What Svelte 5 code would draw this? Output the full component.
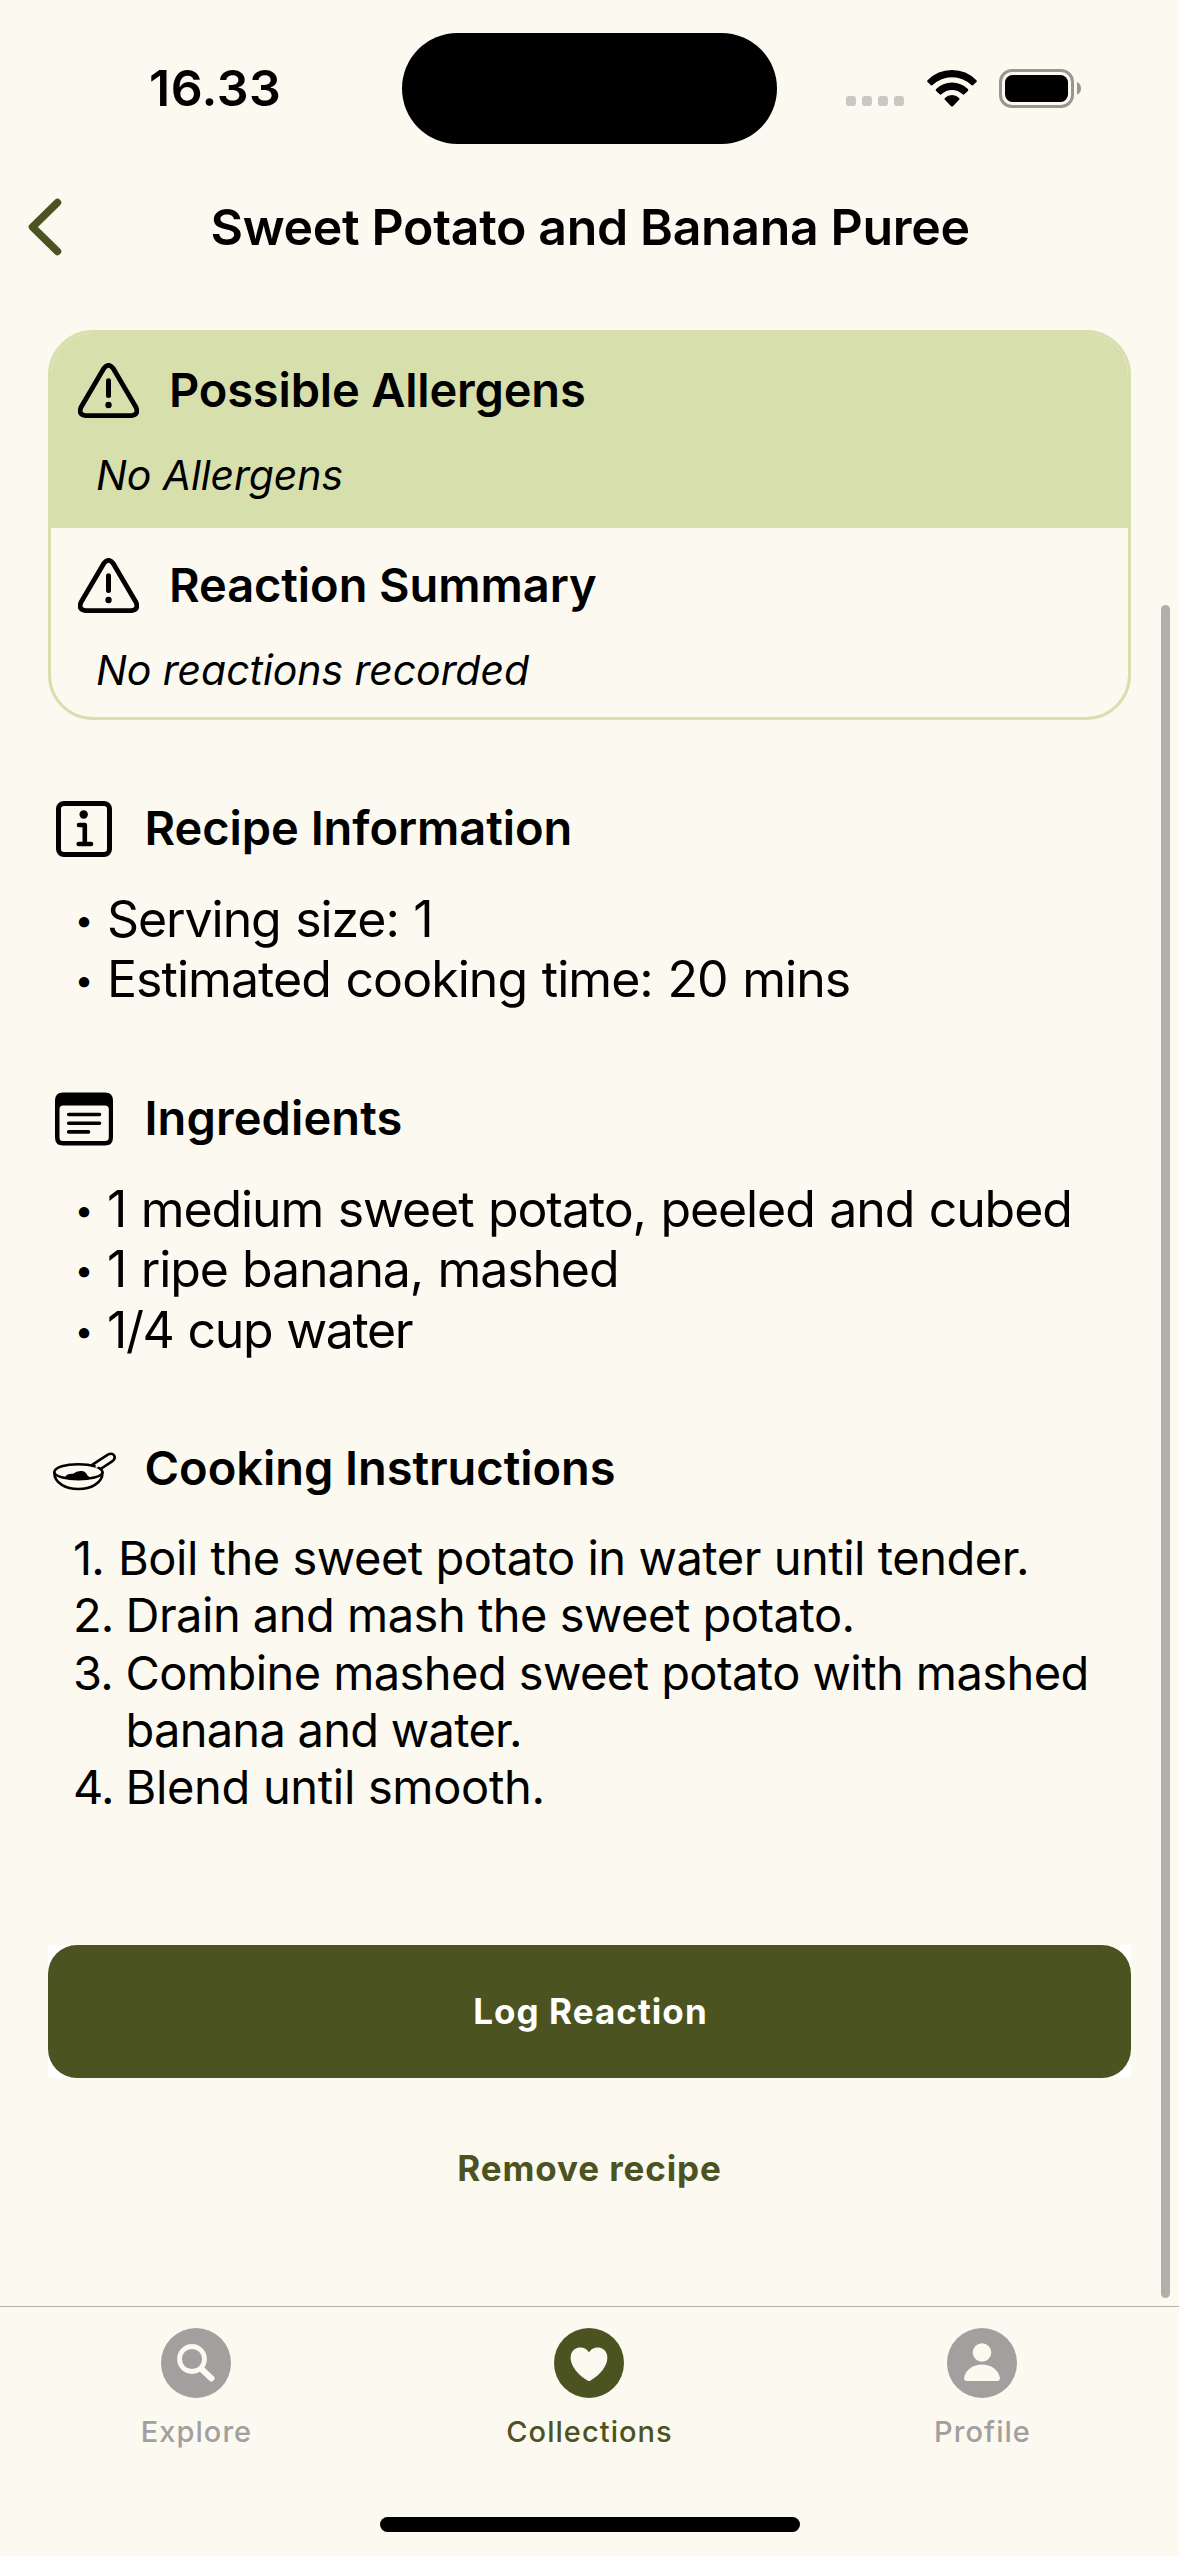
<script>
  const details = ['Serving size: 1', 'Estimated cooking time: 20 mins'];
  const ingredients = [
    '1 medium sweet potato, peeled and cubed',
    '1 ripe banana, mashed',
    '1/4 cup water'
  ];
  const steps = [
    ['Boil the sweet potato in water until tender.'],
    ['Drain and mash the sweet potato.'],
    ['Combine mashed sweet potato with mashed', 'banana and water.'],
    ['Blend until smooth.']
  ];
</script>

{#snippet warning()}
  <svg class="warning" viewBox="0 0 61 55">
    <path d="M25.9 5.2 Q30.5 -0.6 35.1 5.2 L58 44.3 Q61 51.8 53.4 52.6 H7.6 Q0 51.8 3 44.3 Z" fill="none" stroke="#000" stroke-width="4.8" stroke-linejoin="round" />
    <path d="M30.5 17.7 V32.6" stroke="#000" stroke-width="5" stroke-linecap="round" />
    <circle cx="30.5" cy="42" r="3.2" />
  </svg>
{/snippet}

<div class="screen">
  <div class="status">
    <div class="time">16.33</div>
    <div class="island"></div>
    <div class="indicators">
      <svg class="cell" viewBox="0 0 58 10">
        <rect width="10" height="10" rx="3" /><rect x="16" width="10" height="10" rx="3" />
        <rect x="32" width="10" height="10" rx="3" /><rect x="48" width="10" height="10" rx="3" />
      </svg>
      <svg class="wifi" viewBox="0 0 50 37">
        <path d="M0.6 10.2 Q10.6 0 25 0 T49.4 10.2 Q50.3 11.2 49.4 12 L46 15.2 Q45.2 15.9 44.3 15.1 Q36 7.3 25 7.3 T5.7 15.1 Q4.8 15.9 4 15.2 L0.6 12 Q-0.3 11.2 0.6 10.2 Z" />
        <path d="M9.1 19 Q15.8 12.5 25 12.5 T40.9 19 Q41.8 20 40.9 20.9 L37.3 24.3 Q36.5 25 35.6 24.3 Q31 20 25 20 T14.4 24.3 Q13.5 25 12.7 24.3 L9.1 20.9 Q8.2 20 9.1 19 Z" />
        <path d="M17.9 27.9 Q20.8 25.1 25 25.1 T32.1 27.9 Q33 28.8 32.1 29.7 L25.9 36.2 Q25 37 24.1 36.2 L17.9 29.7 Q17 28.8 17.9 27.9 Z" />
      </svg>
      <svg class="battery" viewBox="0 0 82 39">
        <rect x="1.5" y="1.5" width="72" height="36" rx="11.5" fill="none" stroke="#979690" stroke-width="3" />
        <rect x="6" y="6" width="63" height="27" rx="7.5" />
        <path d="M78 13 Q82 14.8 82 19.5 T78 25.5 Z" fill="#979690" />
      </svg>
    </div>
  </div>

  <header>
    <svg class="back" viewBox="0 0 34 58">
      <path d="M29.5 4.5 L4.5 29 L29.5 53.5" fill="none" stroke="#4b5320" stroke-width="7.5" stroke-linecap="round" stroke-linejoin="round" />
    </svg>
    <h1>Sweet Potato and Banana Puree</h1>
  </header>

  <main>
    <div class="card">
      <section class="allergens">
        <div class="card-head">{@render warning()}<h2>Possible Allergens</h2></div>
        <p>No Allergens</p>
      </section>
      <section>
        <div class="card-head">{@render warning()}<h2 class="reaction">Reaction Summary</h2></div>
        <p class="summary">No reactions recorded</p>
      </section>
    </div>

    <section class="block">
      <div class="head">
        <svg viewBox="0 0 66 66">
          <rect x="7.5" y="7.5" width="51" height="51" rx="5.5" fill="none" stroke="#000" stroke-width="5" />
          <circle cx="32.7" cy="18.5" r="4.2" />
          <path d="M28 29 H33.8 V48 M27.7 48 H40" fill="none" stroke="#000" stroke-width="4.6" stroke-linecap="round" stroke-linejoin="round" />
        </svg>
        <h2>Recipe Information</h2>
      </div>
      <ul class="details">
        {#each details as item}
          <li><span class="bullet">•</span><span>{item}</span></li>
        {/each}
      </ul>
    </section>

    <section class="block">
      <div class="head">
        <svg viewBox="0 0 66 66">
          <path fill-rule="evenodd" d="M12 6.5 H54 Q62 6.5 62 14.5 V51.5 Q62 59.5 54 59.5 H12 Q4 59.5 4 51.5 V14.5 Q4 6.5 12 6.5 Z M12 19.5 Q8.5 19.5 8.5 23 V51.5 Q8.5 55 12 55 H54 Q57.8 55 57.8 51.5 V23 Q57.8 19.5 54 19.5 Z" />
          <path d="M17.7 28.5 H48.5 M17.7 37.2 H48.5 M17.7 45.9 H37.5" stroke="#000" stroke-width="3.6" stroke-linecap="round" />
        </svg>
        <h2 class="short">Ingredients</h2>
      </div>
      <ul class="ingredients">
        {#each ingredients as item}
          <li><span class="bullet">•</span><span>{item}</span></li>
        {/each}
      </ul>
    </section>

    <section class="block">
      <div class="head">
        <svg viewBox="0 0 66 66" fill="none" stroke="#000" stroke-width="2.6" stroke-linejoin="round" stroke-linecap="round">
          <path d="M3.3 36.5 C3.3 25.5 51.5 25.5 51.5 36.5 C51.5 58.5 3.3 58.5 3.3 36.5 Z" />
          <path d="M3.3 36.5 C6 45.5 49 45.5 51.5 36.5" />
          <path d="M14 42 Q15 37.5 22 37.8 Q26 34.5 30.5 35 Q34.5 35 36.5 39.5 L39 41.5 Q27 45 14 42 Z" fill="#000" stroke="none" />
          <path d="M41.5 28.6 L56.5 18.8 Q61 16.4 63.2 19.6 Q64.8 23 61.5 25.2 L49.6 33" />
          <path d="M45.6 30.6 L58.6 22" stroke="#fcf9f1" stroke-width="2.4" />
        </svg>
        <h2>Cooking Instructions</h2>
      </div>
      <ol>
        {#each steps as lines, i}
          <li>
            <span class="number">{i + 1}.</span>
            <span class="lines">{#each lines as line}<span>{line}</span>{/each}</span>
          </li>
        {/each}
      </ol>
    </section>

    <div class="primary-wrap"><button class="primary">Log Reaction</button></div>
    <button class="remove">Remove recipe</button>
  </main>

  <nav>
    <div class="tab">
      <svg viewBox="0 0 70 70">
        <circle cx="35" cy="35" r="35" fill="#a1a09e" />
        <circle cx="31" cy="31" r="12.5" fill="none" stroke="#fcf9f1" stroke-width="4.8" />
        <path d="M41 41.5 L50.5 50.5" stroke="#fcf9f1" stroke-width="6" stroke-linecap="round" />
      </svg>
      <span>Explore</span>
    </div>
    <div class="tab active">
      <svg viewBox="0 0 70 70">
        <circle cx="35" cy="35" r="35" fill="#4b5320" />
        <path d="M35 24.2 C31 18.5 25 19 21.5 20.8 C17 23.3 16 28.5 17 33 C19 42 27.5 49 33.5 52.6 Q35 53.6 36.5 52.6 C42.5 49 51 42 53 33 C54 28.5 53 23.3 48.5 20.8 C45 19 39 18.5 35 24.2 Z" fill="#fcf9f1" />
      </svg>
      <span>Collections</span>
    </div>
    <div class="tab">
      <svg viewBox="0 0 70 70">
        <circle cx="35" cy="35" r="35" fill="#a1a09e" />
        <circle cx="35" cy="24.5" r="9.3" fill="#fcf9f1" />
        <path d="M20 53 Q17 53 17 50 C18.5 41.5 26.5 36.6 35 36.6 S51.5 41.5 53 50 Q53 53 50 53 Z" fill="#fcf9f1" />
      </svg>
      <span>Profile</span>
    </div>
  </nav>

  <div class="scrollbar"></div>
  <div class="home"></div>
</div>

<style>
  :global(body) { margin: 0; background: #fcf9f1; }

  .screen {
    position: relative;
    display: flex;
    flex-direction: column;
    width: 1179px;
    height: 2556px;
    overflow: hidden;
    background: #fcf9f1;
    color: #000;
    font-family: Inter, 'Liberation Sans', sans-serif;
  }
  svg { display: block; flex: none; }
  h1, h2, p, ul, ol { margin: 0; padding: 0; }
  ul, ol { list-style: none; }
  span, h1, h2, p { white-space: nowrap; }

  .status {
    display: grid;
    grid-template-columns: 402px 375px 402px;
    align-items: center;
    height: 111px;
    padding: 33px 0;
  }
  .time {
    padding: 0 0 2px 149px;
    font-size: 50px;
    font-weight: 600;
    line-height: 60px;
    letter-spacing: 0.5px;
  }
  .island { height: 111px; border-radius: 56px; background: #000; }
  .indicators { display: flex; align-items: center; padding: 0 0 1px 69px; }
  .cell { width: 58px; height: 10px; margin: 26px 23px 0 0; fill: #c9c7c1; }
  .wifi { width: 50px; height: 37px; margin-right: 22px; }
  .battery { width: 82px; height: 39px; }

  header {
    display: flex;
    align-items: center;
    height: 100px;
  }
  .back { width: 34px; height: 58px; margin: 0 0 1px 27.5px; }
  h1 {
    margin-left: 149px;
    font-size: 50px;
    font-weight: 600;
    line-height: 60px;
    letter-spacing: -0.34px;
  }

  main {
    flex: 1;
    display: flex;
    flex-direction: column;
    padding: 53px 48px 0;
  }

  .card {
    box-sizing: border-box;
    height: 390px;
    border: 3px solid #d7dfad;
    border-radius: 45px;
    overflow: hidden;
  }
  .card section { height: 189px; padding: 30px 27px 0; box-sizing: border-box; }
  .card .allergens { height: 195px; background: #d7dfad; }
  .card-head { display: flex; align-items: center; gap: 30px; height: 55px; }
  .warning { width: 61px; height: 55px; }
  h2 {
    font-size: 47px;
    font-weight: 600;
    line-height: 56px;
    letter-spacing: -0.05px;
  }
  h2.short { letter-spacing: 0.1px; }
  .card h2 { margin-top: -1px; letter-spacing: -0.18px; }
  .card h2.reaction { letter-spacing: -0.08px; }
  .card p {
    margin: 32px 0 0 18px;
    font-size: 41px;
    font-style: italic;
    line-height: 50px;
    letter-spacing: -0.1px;
  }
  .card p.summary { letter-spacing: -0.07px; }

  .block { padding-top: 75.8px; }
  .head { display: flex; align-items: center; gap: 27.5px; height: 66px; padding-left: 3px; }
  .head svg { width: 66px; height: 66px; }
  .head h2 { margin-top: -1px; }
  ul, ol { margin-top: 27px; }
  li { display: flex; }
  ul li {
    gap: 9px;
    padding-left: 22px;
    font-size: 50px;
    line-height: 60.5px;
    letter-spacing: -1.08px;
    word-spacing: 1.5px;
  }
  .details li:last-child { letter-spacing: -0.95px; }
  .ingredients li:nth-child(2) { letter-spacing: -1.12px; }
  .ingredients li:last-child { letter-spacing: -1.4px; }
  .bullet {
    width: 28px;
    height: 59.5px;
    padding-top: 1px;
    text-align: center;
    font-size: 33px;
    letter-spacing: 0;
  }
  ol li {
    padding-left: 25px;
    font-size: 47px;
    line-height: 57.33px;
    letter-spacing: -0.5px;
  }
  .number { width: 52.5px; letter-spacing: -0.8px; }
  ol li:first-child .number { width: 45px; }
  .lines { display: flex; flex-direction: column; }
  ol li:first-child { letter-spacing: -0.47px; }
  ol li:nth-child(3) { letter-spacing: -0.57px; }
  .lines span:nth-child(2) { letter-spacing: -0.73px; }
  ol li:last-child { letter-spacing: -0.32px; }

  button {
    padding: 0;
    border: 0;
    font: 700 35px/44px Inter, 'Liberation Sans', sans-serif;
    letter-spacing: 1.05px;
  }
  .primary-wrap { margin-top: 129.2px; background: #fff; }
  .primary {
    display: block;
    width: 100%;
    height: 133px;
    padding-left: 2px;
    border-radius: 29px;
    background: #4b5320;
    color: #fff;
  }
  .remove {
    height: 60px;
    margin-top: 60px;
    background: none;
    color: #4b5320;
    letter-spacing: 0.88px;
  }

  nav {
    display: grid;
    grid-template-columns: repeat(3, 1fr);
    box-sizing: border-box;
    height: 250px;
    padding-top: 21px;
    border-top: 1px solid #b2b1ac;
  }
  .tab {
    display: flex;
    flex-direction: column;
    align-items: center;
    gap: 15.5px;
    color: #a1a09e;
    font-size: 29px;
    font-weight: 500;
    line-height: 36px;
    letter-spacing: 1.05px;
  }
  .tab svg { width: 70px; height: 70px; margin-right: 1.5px; }
  .tab.active { color: #4b5320; }

  .scrollbar {
    position: absolute;
    top: 605px;
    right: 9px;
    width: 9px;
    height: 1693px;
    border-radius: 5px;
    background: #b0afaa;
  }
  .home {
    position: absolute;
    left: 380px;
    bottom: 24px;
    width: 420px;
    height: 15px;
    border-radius: 8px;
    background: #000;
  }
</style>
